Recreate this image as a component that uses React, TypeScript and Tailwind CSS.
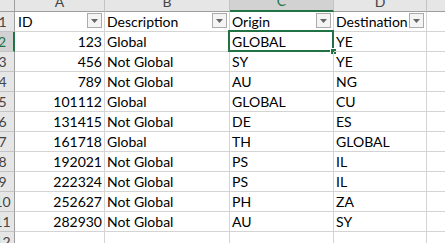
import React from "react";

const rows: [string, string, string, string][] = [
  ["123", "Global", "GLOBAL", "YE"],
  ["456", "Not Global", "SY", "YE"],
  ["789", "Not Global", "AU", "NG"],
  ["101112", "Global", "GLOBAL", "CU"],
  ["131415", "Not Global", "DE", "ES"],
  ["161718", "Global", "TH", "GLOBAL"],
  ["192021", "Not Global", "PS", "IL"],
  ["222324", "Not Global", "PS", "IL"],
  ["252627", "Not Global", "PH", "ZA"],
  ["282930", "Not Global", "AU", "SY"],
];

function Drop() {
  return (
    <span className="absolute right-[2px] top-[1px] flex h-[15px] w-[15px] items-center justify-center border border-[#ababab] bg-[#f4f4f4]">
      <svg width="7" height="4" viewBox="0 0 7 4">
        <polygon points="0,0 7,0 3.5,4" fill="#666" />
      </svg>
    </span>
  );
}

const cell = "relative h-full shrink-0 border-r border-b border-[#d4d4d4] whitespace-nowrap overflow-visible leading-[19px]";
const rh = "h-full w-[24px] shrink-0 border-r border-b border-r-[#9e9e9e] border-b-[#c4c4c4] bg-[#e6e6e6] text-center text-[#444] leading-[19px]";

export default function App() {
  return (
    <div className="relative h-[243px] w-[445px] overflow-hidden bg-white" style={{ fontFamily: "Lato, sans-serif" }}>
      <div className="-ml-[9px] -mt-[8px] text-[14px] text-black">
        {/* column header row */}
        <div className="flex h-[20px]">
          <div className="h-full w-[24px] shrink-0 border-r border-b border-r-[#9e9e9e] border-b-[#9e9e9e] bg-[#e6e6e6]" />
          <div className="h-full w-[90px] shrink-0 border-r border-b border-r-[#c4c4c4] border-b-[#9e9e9e] bg-[#e6e6e6] text-center leading-[19px] text-[#444]">A</div>
          <div className="h-full w-[125px] shrink-0 border-r border-b border-r-[#c4c4c4] border-b-[#9e9e9e] bg-[#e6e6e6] text-center leading-[19px] text-[#444]">B</div>
          <div className="h-full w-[104px] shrink-0 border-r border-b-2 border-r-[#c4c4c4] border-b-[#217346] bg-[#d2d2d2] text-center leading-[18px] text-[#217346]">C</div>
          <div className="h-full w-[93px] shrink-0 border-r border-b border-r-[#c4c4c4] border-b-[#9e9e9e] bg-[#e6e6e6] text-center leading-[19px] text-[#444]">D</div>
          <div className="h-full w-[40px] shrink-0 border-b border-b-[#9e9e9e] bg-[#e6e6e6]" />
        </div>
        {/* header data row */}
        <div className="flex h-[20px]">
          <div className={rh}>1</div>
          <div className={`${cell} w-[90px] pl-[3px]`}>ID<Drop /></div>
          <div className={`${cell} w-[125px] pl-[2px]`}>Description<Drop /></div>
          <div className={`${cell} w-[104px] pl-[2px]`}>Origin<Drop /></div>
          <div className={`${cell} w-[93px] pl-[2px]`}>Destination<Drop /></div>
          <div className={`${cell} w-[40px]`} />
        </div>
        {rows.map((r, i) => {
          const sel = i === 0;
          return (
            <div key={i} className="flex h-[20px]">
              {sel ? (
                <div className="h-full w-[24px] shrink-0 border-r-2 border-b border-r-[#217346] border-b-[#c4c4c4] bg-[#d2d2d2] text-center leading-[19px] text-[#217346]">{i + 2}</div>
              ) : (
                <div className={rh}>{i + 2}</div>
              )}
              <div className={`${cell} w-[90px] pr-[2px] text-right`}>{r[0]}</div>
              <div className={`${cell} w-[125px] pl-[2px]`}>{r[1]}</div>
              <div className={`${cell} w-[104px] pl-[2px]`}>
                {r[2]}
                {sel && (
                  <>
                    <span className="absolute -left-[2px] -top-[2px] h-[22px] w-[106px] border-2 border-[#217346]" />
                    <span className="absolute left-[100px] top-[16px] h-[7px] w-[7px] border border-white bg-[#217346]" />
                  </>
                )}
              </div>
              <div className={`${cell} w-[93px] pl-[2px]`}>{r[3]}</div>
              <div className={`${cell} w-[40px]`} />
            </div>
          );
        })}
        <div className="flex h-[20px]">
          <div className={rh}>12</div>
          <div className={`${cell} w-[90px]`} />
          <div className={`${cell} w-[125px]`} />
          <div className={`${cell} w-[104px]`} />
          <div className={`${cell} w-[93px]`} />
          <div className={`${cell} w-[40px]`} />
        </div>
      </div>
    </div>
  );
}
